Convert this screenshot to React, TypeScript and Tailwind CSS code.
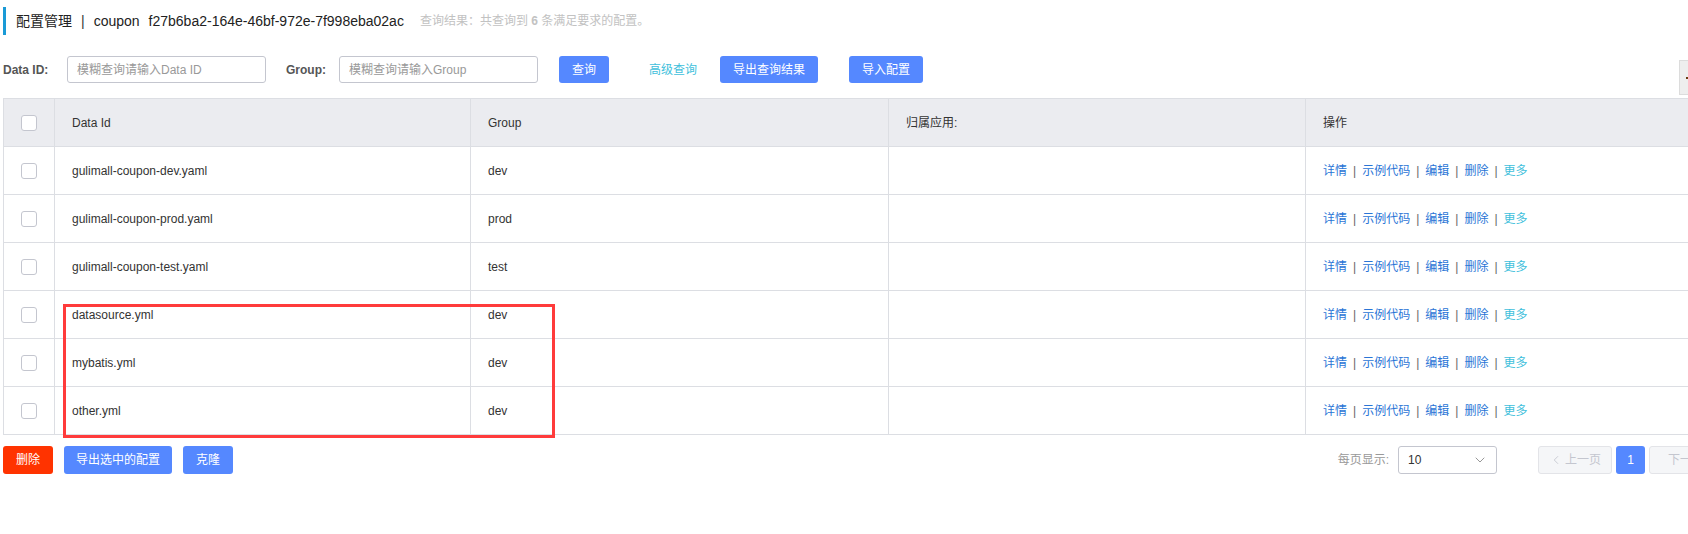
import { ChevronDown, ChevronLeft } from "lucide-react";

const rows = [
  { id: "gulimall-coupon-dev.yaml", group: "dev" },
  { id: "gulimall-coupon-prod.yaml", group: "prod" },
  { id: "gulimall-coupon-test.yaml", group: "test" },
  { id: "datasource.yml", group: "dev" },
  { id: "mybatis.yml", group: "dev" },
  { id: "other.yml", group: "dev" },
];

function Checkbox() {
  return <span className="block mx-auto w-4 h-4 rounded-[3px] border border-[#c4c6cf] bg-white" />;
}

function Ops() {
  const sep = <span className="mx-[6px] text-[#666]">|</span>;
  return (
    <span className="text-[#2a75d6]">
      详情{sep}示例代码{sep}编辑{sep}删除{sep}
      <span className="text-[#3fbfdc]">更多</span>
    </span>
  );
}

export default function App() {
  return (
    <div className="relative w-[1688px] h-[534px] overflow-hidden bg-white text-[12px] text-[#333] font-['Liberation_Sans','Noto_Sans_CJK_SC',sans-serif]">
      <div className="w-[1730px]">
        {/* title */}
        <div className="mt-[7px] ml-[3px] h-[28px] flex items-center border-l-[3px] border-[#1a9ad6] pl-[10px]">
          <span className="text-[14px] text-[#222]">配置管理</span>
          <span className="text-[14px] text-[#333] mx-[9px]">|</span>
          <span className="text-[14px] text-[#222]">coupon</span>
          <span className="text-[14px] text-[#222] ml-[9px]">f27b6ba2-164e-46bf-972e-7f998eba02ac</span>
          <span className="ml-[16px] text-[#c2c2c2]">
            查询结果：共查询到 <b className="font-bold">6</b> 条满足要求的配置。
          </span>
        </div>

        {/* filters */}
        <div className="mt-[21px] ml-[3px] flex items-center h-[27px]">
          <span className="font-bold text-[#555] w-[50px]">Data ID:</span>
          <input
            className="ml-[14px] w-[199px] h-[27px] rounded-[3px] border border-[#c4c6cf] px-[9px] text-[12px] placeholder:text-[#999] outline-none"
            placeholder="模糊查询请输入Data ID"
          />
          <span className="ml-[20px] font-bold text-[#555] w-[41px]">Group:</span>
          <input
            className="ml-[12px] w-[199px] h-[27px] rounded-[3px] border border-[#c4c6cf] px-[9px] text-[12px] placeholder:text-[#999] outline-none"
            placeholder="模糊查询请输入Group"
          />
          <button className="ml-[21px] w-[50px] h-[27px] rounded-[3px] bg-[#5588ff] text-white">查询</button>
          <span className="ml-[40px] text-[#3fbfdc]">高级查询</span>
          <button className="ml-[23px] w-[98px] h-[27px] rounded-[3px] bg-[#5588ff] text-white">导出查询结果</button>
          <button className="ml-[31px] w-[74px] h-[27px] rounded-[3px] bg-[#5588ff] text-white">导入配置</button>
        </div>

        {/* table */}
        <div className="relative mt-[15px] ml-[3px]">
          <table className="w-[1727px] table-fixed border-collapse">
            <colgroup>
              <col className="w-[51px]" />
              <col className="w-[416px]" />
              <col className="w-[418px]" />
              <col className="w-[417px]" />
              <col />
            </colgroup>
            <thead>
              <tr className="h-[48px] bg-[#ebecf0]">
                <th className="border border-[#dcdee3] font-normal"><Checkbox /></th>
                <th className="border border-[#dcdee3] font-normal text-left px-[17px]">Data Id</th>
                <th className="border border-[#dcdee3] font-normal text-left px-[17px]">Group</th>
                <th className="border border-[#dcdee3] font-normal text-left px-[17px]">归属应用:</th>
                <th className="border border-[#dcdee3] font-normal text-left px-[17px]">操作</th>
              </tr>
            </thead>
            <tbody>
              {rows.map((r) => (
                <tr key={r.id} className="h-[48px]">
                  <td className="border border-[#dcdee3]"><Checkbox /></td>
                  <td className="border border-[#dcdee3] px-[17px]">{r.id}</td>
                  <td className="border border-[#dcdee3] px-[17px]">{r.group}</td>
                  <td className="border border-[#dcdee3] px-[17px]"></td>
                  <td className="border border-[#dcdee3] px-[17px]"><Ops /></td>
                </tr>
              ))}
            </tbody>
          </table>
          <div className="absolute left-[60px] top-[206px] w-[492px] h-[134px] border-[3px] border-[#ff3b3b]" />
        </div>

        {/* footer */}
        <div className="mt-[11px] ml-[3px] pr-[7px] flex items-center h-[28px]">
          <button className="w-[50px] h-[28px] rounded-[3px] bg-[#ff3300] text-white">删除</button>
          <button className="ml-[11px] w-[108px] h-[28px] rounded-[3px] bg-[#5588ff] text-white">导出选中的配置</button>
          <button className="ml-[11px] w-[50px] h-[28px] rounded-[3px] bg-[#5588ff] text-white">克隆</button>
          <div className="ml-auto flex items-center">
            <span className="text-[#999]">每页显示:</span>
            <div className="ml-[9px] w-[99px] h-[28px] rounded-[3px] border border-[#c4c6cf] flex items-center justify-between pl-[9px] pr-[8px]">
              <span className="text-[#333]">10</span>
              <ChevronDown size={16} strokeWidth={1.3} className="text-[#888]" />
            </div>
            <div className="ml-[41px] w-[74px] h-[28px] rounded-[3px] border border-[#e3e4e8] bg-[#f5f6f8] text-[#c4c6cf] flex items-center justify-center">
              <ChevronLeft size={14} strokeWidth={1.5} />
              <span className="ml-[2px]">上一页</span>
            </div>
            <div className="ml-[4px] w-[29px] h-[28px] rounded-[3px] bg-[#5588ff] text-white flex items-center justify-center">1</div>
            <div className="ml-[4px] w-[74px] h-[28px] rounded-[3px] border border-[#e3e4e8] bg-[#f5f6f8] text-[#c4c6cf] flex items-center justify-center">
              <span>下一页</span>
            </div>
          </div>
        </div>
      </div>
      <div className="absolute right-0 top-[60px] w-[9px] h-[35px] border border-r-0 border-[#dcdcdc] bg-[#eeeeee]">
        <span className="absolute left-[6px] top-[16px] w-[3px] h-[2px] bg-[#6b3a10]" />
      </div>
    </div>
  );
}
